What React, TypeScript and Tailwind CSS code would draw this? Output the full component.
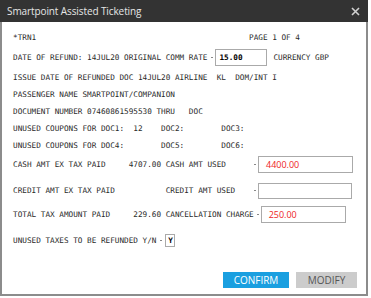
import React from "react";

const mono = { fontFamily: '"DejaVu Sans Mono", "Liberation Mono", monospace' };
const sans = { fontFamily: '"Open Sans", "Noto Sans", sans-serif' };

function Dot({ className = "" }: { className?: string }) {
  return <span className={`inline-block w-[2px] h-[1px] bg-[#888] ${className}`} />;
}

function Row({ children, className = "" }: { children: React.ReactNode; className?: string }) {
  return <div className={`flex items-center h-[17px] ${className}`}>{children}</div>;
}

export default function App() {
  return (
    <div className="w-[371px] h-[298px] bg-white">
      <div className="w-[368px] h-[296px] flex flex-col border-x-2 border-b-2 border-[#8c8c8c] bg-white">
        {/* title bar */}
        <div className="h-[22px] -mx-[2px] bg-[#333333] flex items-center justify-between pl-[7px] pr-[6px]">
          <span className="text-[10px] text-[#e6e6e6] tracking-[-0.1px]" style={sans}>
            Smartpoint Assisted Ticketing
          </span>
          <svg width="9" height="9" viewBox="0 0 9 9" className="mr-[2px]">
            <path d="M1 1 L8 8 M8 1 L1 8" stroke="#d0d0d0" strokeWidth="1.6" />
          </svg>
        </div>

        {/* body */}
        <div className="flex flex-col pl-[11px] pt-[7px] text-[7.7px] text-[#2a2a2a] whitespace-pre" style={mono}>
          <Row>
            <span className="w-[236px]">*TRN1</span>
            <span>PAGE 1 OF 4</span>
          </Row>
          <Row className="mt-[3px]">
            <span>DATE OF REFUND: 14JUL20 ORIGINAL COMM RATE</span>
            <Dot className="ml-[4px]" />
            <div className="ml-[2px] w-[52px] h-[17px] border border-[#aaa] flex items-center pl-[3px] font-bold text-black">
              15.00
            </div>
            <span className="ml-[6px]">CURRENCY GBP</span>
          </Row>
          <Row className="mt-[3px]">
            <span>ISSUE DATE OF REFUNDED DOC 14JUL20 AIRLINE  KL  DOM/INT I</span>
          </Row>
          <Row>
            <span>PASSENGER NAME SMARTPOINT/COMPANION</span>
          </Row>
          <Row>
            <span>DOCUMENT NUMBER 07460861595530 THRU   DOC</span>
          </Row>
          <Row>
            <span>UNUSED COUPONS FOR DOC1:  12    DOC2:        DOC3:</span>
          </Row>
          <Row>
            <span>UNUSED COUPONS FOR DOC4:        DOC5:        DOC6:</span>
          </Row>
          <Row className="mt-[2px]">
            <span className="w-[241px]">CASH AMT EX TAX PAID     4707.00 CASH AMT USED</span>
            <Dot />
            <div
              className="ml-[2px] w-[95px] h-[17px] border border-[#aaa] flex items-center pl-[7px] text-[9px] font-medium text-[#ee1c25]"
              style={sans}
            >
              4400.00
            </div>
          </Row>
          <Row className="mt-[9px]">
            <span className="w-[241px]">CREDIT AMT EX TAX PAID           CREDIT AMT USED</span>
            <Dot />
            <div className="ml-[2px] w-[94px] h-[16px] border border-[#aaa]" />
          </Row>
          <Row className="mt-[7px]">
            <span>TOTAL TAX AMOUNT PAID     229.60 CANCELLATION CHARGE</span>
            <Dot className="ml-[3px]" />
            <div
              className="ml-[2px] w-[85px] h-[17px] border border-[#aaa] flex items-center pl-[7px] text-[9px] font-medium text-[#ee1c25]"
              style={sans}
            >
              250.00
            </div>
          </Row>
          <Row className="mt-[9px]">
            <span>UNUSED TAXES TO BE REFUNDED Y/N</span>
            <Dot className="ml-[4px]" />
            <div className="ml-[3px] w-[10px] h-[13px] border border-[#aaa] flex items-center justify-center font-bold text-black">
              Y
            </div>
          </Row>
        </div>

        {/* buttons */}
        <div className="mt-[23px] flex justify-end gap-[7px] pr-[9px] text-[10px]" style={sans}>
          <button className="w-[66px] h-[16px] bg-[#1a9fe0] text-white flex items-center justify-center">
            CONFIRM
          </button>
          <button className="w-[61px] h-[16px] bg-[#cccccc] text-[#555] flex items-center justify-center">
            MODIFY
          </button>
        </div>
      </div>
    </div>
  );
}
